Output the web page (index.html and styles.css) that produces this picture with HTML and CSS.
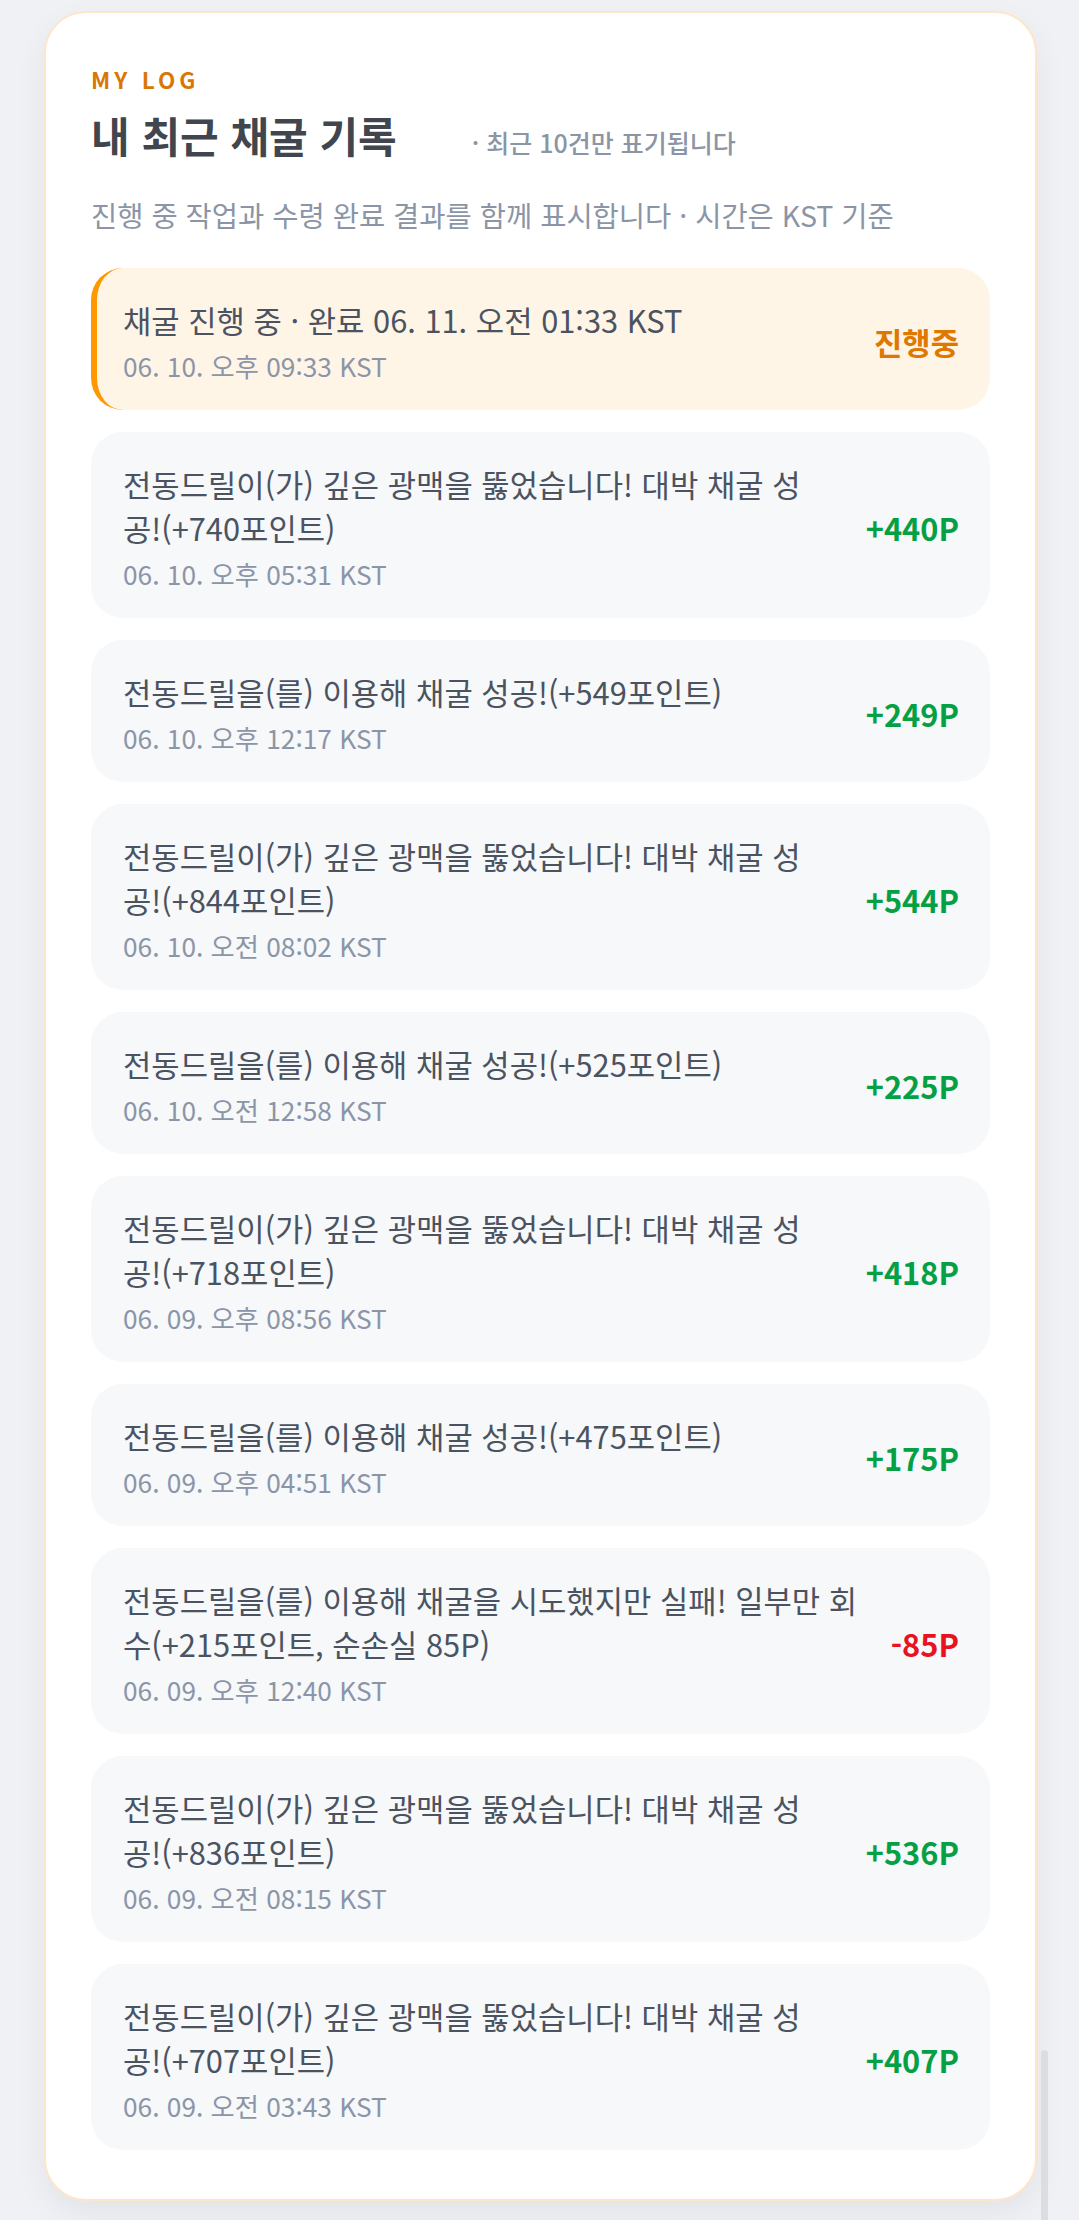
FILE: index.html
```html
<!DOCTYPE html>
<html lang="ko">
<head>
    <meta charset="UTF-8">
    <meta name="viewport" content="width=device-width, initial-scale=1.0">
    <title>내 최근 채굴 기록</title>
    <link rel="stylesheet" href="styles.css">
</head>
<body>
    <main class="log-card">
        <p class="eyebrow">MY LOG</p>
        <div class="log-head">
            <h2>내 최근 채굴 기록</h2>
            <span class="log-limit">· 최근 10건만 표기됩니다</span>
        </div>
        <p class="log-desc">진행 중 작업과 수령 완료 결과를 함께 표시합니다 · 시간은 KST 기준</p>

        <ul class="log-list">
            <li class="log-item pending">
                <div class="log-body">
                    <p class="log-msg">채굴 진행 중 · 완료 06. 11. 오전 01:33 KST</p>
                    <p class="log-time">06. 10. 오후 09:33 KST</p>
                </div>
                <span class="log-amount">진행중</span>
            </li>
            <li class="log-item">
                <div class="log-body">
                    <p class="log-msg">전동드릴이(가) 깊은 광맥을 뚫었습니다! 대박 채굴 성공!(+740포인트)</p>
                    <p class="log-time">06. 10. 오후 05:31 KST</p>
                </div>
                <span class="log-amount plus">+440P</span>
            </li>
            <li class="log-item">
                <div class="log-body">
                    <p class="log-msg">전동드릴을(를) 이용해 채굴 성공!(+549포인트)</p>
                    <p class="log-time">06. 10. 오후 12:17 KST</p>
                </div>
                <span class="log-amount plus">+249P</span>
            </li>
            <li class="log-item">
                <div class="log-body">
                    <p class="log-msg">전동드릴이(가) 깊은 광맥을 뚫었습니다! 대박 채굴 성공!(+844포인트)</p>
                    <p class="log-time">06. 10. 오전 08:02 KST</p>
                </div>
                <span class="log-amount plus">+544P</span>
            </li>
            <li class="log-item">
                <div class="log-body">
                    <p class="log-msg">전동드릴을(를) 이용해 채굴 성공!(+525포인트)</p>
                    <p class="log-time">06. 10. 오전 12:58 KST</p>
                </div>
                <span class="log-amount plus">+225P</span>
            </li>
            <li class="log-item">
                <div class="log-body">
                    <p class="log-msg">전동드릴이(가) 깊은 광맥을 뚫었습니다! 대박 채굴 성공!(+718포인트)</p>
                    <p class="log-time">06. 09. 오후 08:56 KST</p>
                </div>
                <span class="log-amount plus">+418P</span>
            </li>
            <li class="log-item">
                <div class="log-body">
                    <p class="log-msg">전동드릴을(를) 이용해 채굴 성공!(+475포인트)</p>
                    <p class="log-time">06. 09. 오후 04:51 KST</p>
                </div>
                <span class="log-amount plus">+175P</span>
            </li>
            <li class="log-item">
                <div class="log-body">
                    <p class="log-msg">전동드릴을(를) 이용해 채굴을 시도했지만 실패! 일부만 회수(+215포인트, 순손실 85P)</p>
                    <p class="log-time">06. 09. 오후 12:40 KST</p>
                </div>
                <span class="log-amount minus">-85P</span>
            </li>
            <li class="log-item">
                <div class="log-body">
                    <p class="log-msg">전동드릴이(가) 깊은 광맥을 뚫었습니다! 대박 채굴 성공!(+836포인트)</p>
                    <p class="log-time">06. 09. 오전 08:15 KST</p>
                </div>
                <span class="log-amount plus">+536P</span>
            </li>
            <li class="log-item">
                <div class="log-body">
                    <p class="log-msg">전동드릴이(가) 깊은 광맥을 뚫었습니다! 대박 채굴 성공!(+707포인트)</p>
                    <p class="log-time">06. 09. 오전 03:43 KST</p>
                </div>
                <span class="log-amount plus">+407P</span>
            </li>
        </ul>
    </main>

    <div class="scroll-thumb"></div>
</body>
</html>
```

FILE: styles.css
```css
* {
    box-sizing: border-box;
    margin: 0;
    padding: 0;
    font-family: 'Noto Sans CJK KR', 'Noto Sans', sans-serif;
}

body {
    background: #eff1f4;
    padding: 11px 42px 18px 44px;
    min-height: 100vh;
}

/* Card */
.log-card {
    background: white;
    border: 2px solid #fde6ca;
    border-radius: 42px;
    box-shadow: 0 12px 32px rgba(15, 23, 42, 0.06);
    padding: 51px 45px 49px 45px;
}

.eyebrow {
    font-size: 22.5px;
    line-height: 30px;
    font-weight: 700;
    letter-spacing: 0.18em;
    color: #d97706;
}

.log-head {
    display: flex;
    align-items: baseline;
    gap: 75px;
    margin-top: 15px;
}

.log-head h2 {
    font-size: 42px;
    line-height: 52px;
    font-weight: 700;
    color: #41464e;
}

.log-limit {
    font-size: 25px;
    font-weight: 500;
    color: #8b95a5;
}

.log-desc {
    margin-top: 35px;
    font-size: 28.5px;
    line-height: 38px;
    color: #8b95a5;
}

/* List */
.log-list {
    list-style: none;
    display: flex;
    flex-direction: column;
    gap: 22px;
    margin-top: 34px;
}

.log-item {
    display: flex;
    align-items: center;
    gap: 32px;
    background: #f6f8fa;
    border-radius: 32px;
    padding: 30px 31px 26px 32px;
}

.log-item.pending {
    background: #fff5e7;
    border-left: 6px solid #ff9800;
    padding-left: 26px;
}

.log-body {
    flex: 1;
    min-width: 0;
}

.log-msg {
    font-size: 30.8px;
    line-height: 44px;
    color: #4b5361;
}

.log-time {
    margin-top: 6px;
    font-size: 26.25px;
    line-height: 36px;
    color: #8b95a7;
}

.log-amount {
    font-size: 30.8px;
    font-weight: 700;
    white-space: nowrap;
    color: #e07800;
}

.log-amount.plus {
    color: #05a043;
}

.log-amount.minus {
    color: #e8131f;
}

.scroll-thumb {
    position: fixed;
    right: 31px;
    top: 2050px;
    bottom: 0;
    width: 7px;
    border-radius: 4px 4px 0 0;
    background: #dcdde1;
}
```
